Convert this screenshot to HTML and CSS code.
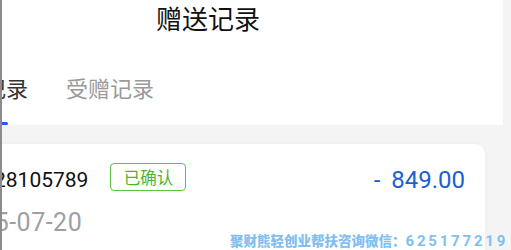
FILE: index.html
```html
<!DOCTYPE html>
<html lang="zh">
<head>
<meta charset="utf-8">
<link rel="stylesheet" href="styles.css">
</head>
<body>
<div class="frame">
  <header class="header">
    <div class="title">赠送记录</div>
    <nav class="tabs">
      <div class="tab active">赠送记录</div>
      <div class="tab">受赠记录</div>
    </nav>
  </header>
  <main class="list">
    <section class="card">
      <div class="row">
        <span class="num">28105789</span>
        <span class="badge">已确认</span>
        <span class="amount">- 849.00</span>
      </div>
      <div class="date">2025-07-20</div>
    </section>
  </main>
  <div class="watermark">聚财熊轻创业帮扶咨询微信：<span class="wm-num">625177219</span></div>
</div>
</body>
</html>
```

FILE: styles.css
```css
html, body {
  margin: 0;
  padding: 0;
}
body {
  width: 511px;
  height: 250px;
  overflow: hidden;
  background: #f4f4f4;
  font-family: Roboto, "Noto Sans CJK SC", sans-serif;
}
.frame {
  position: relative;
  height: 250px;
  border-left: 2px solid #8c8c8c;
  overflow: hidden;
}
.header {
  width: 501px;
  height: 125px;
  background: #fff;
  display: flex;
  flex-direction: column;
}
.title {
  font-family: "Noto Sans CJK SC", sans-serif;
  font-size: 26px;
  line-height: 36px;
  padding-left: 154px;
  color: #111;
}
.tabs {
  flex: 1;
  display: flex;
  gap: 38px;
  margin-top: 36px;
  margin-left: -62px;
  font-family: "Noto Sans CJK SC", sans-serif;
  font-size: 22px;
  line-height: 30px;
}
.tab {
  position: relative;
  color: #9a9a9a;
}
.tab.active {
  color: #333;
}
.tab.active::after {
  content: "";
  position: absolute;
  left: 50%;
  bottom: 0;
  width: 48px;
  height: 3px;
  margin-left: -24px;
  background: #1a5fe0;
  border-radius: 2px;
}
.list {
  padding: 19px 26px 0 0;
}
.card {
  margin-left: -32px;
  background: #fff;
  border-radius: 10px;
  box-shadow: 0 0 4px rgba(0, 0, 0, 0.04);
  padding: 19px 20px 20px 24px;
  height: 120px;
}
.row {
  display: flex;
  align-items: center;
  height: 34px;
}
.num {
  font-size: 21px;
  line-height: 28px;
  color: #111;
}
.badge {
  align-self: flex-start;
  margin-left: 22px;
  box-sizing: border-box;
  width: 76px;
  height: 28px;
  border: 1px solid #5cc43c;
  border-radius: 4px;
  color: #4cb52c;
  font-family: "Noto Sans CJK SC", sans-serif;
  font-size: 16.5px;
  display: flex;
  align-items: center;
  justify-content: center;
}
.amount {
  margin-left: auto;
  font-size: 24px;
  line-height: 28px;
  word-spacing: 5px;
  color: #1a5fd2;
}
.date {
  margin-top: 12px;
  margin-left: -43px;
  font-size: 25px;
  line-height: 28px;
  letter-spacing: 0.5px;
  color: #a0a0a0;
}
.watermark {
  position: absolute;
  left: 228px;
  top: 231px;
  font-family: "Noto Sans CJK SC", sans-serif;
  font-weight: 900;
  font-size: 13.5px;
  line-height: 18px;
  color: #82bff0;
  white-space: nowrap;
}
.wm-num {
  font-family: Roboto, sans-serif;
  font-weight: 700;
  font-size: 15px;
  letter-spacing: 2.8px;
}
```
